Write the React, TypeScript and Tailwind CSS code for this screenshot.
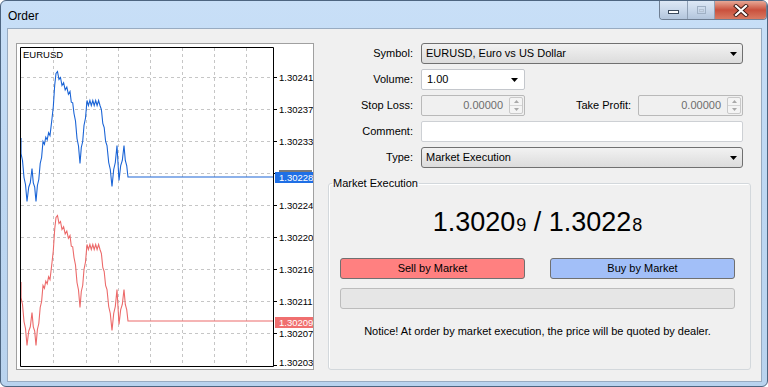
import React from 'react'

// tick-like chart path, keypoints in svg coords
const KEYS: [number, number][] = [
  [4, 94], [4, 106], [10, 154], [15, 126], [19, 154], [26, 99], [33, 88], [35, 76], [39, 26],
  [45, 38], [53, 49], [57, 66], [63, 116], [67, 83], [70, 58], [83, 58], [90, 103], [95, 139],
  [100, 103], [102, 133], [107, 103], [111, 133], [256, 133],
]

function buildPath(offset: number) {
  const pts: string[] = []
  let k = 0
  for (let i = 0; i < KEYS.length - 1; i++) {
    const [x0, y0] = KEYS[i]
    const [x1, y1] = KEYS[i + 1]
    const flat = x0 >= 111
    const steps = flat ? 1 : Math.max(1, Math.round((x1 - x0) / 1.5))
    for (let s = 0; s < steps; s++) {
      const x = x0 + ((x1 - x0) * s) / steps
      const y = y0 + ((y1 - y0) * s) / steps
      const j = flat || x1 === x0 ? 0 : k % 2 ? 3.5 : -1.5
      k++
      pts.push(`${x.toFixed(1)},${(y + j + offset).toFixed(1)}`)
    }
  }
  const last = KEYS[KEYS.length - 1]
  pts.push(`${last[0]},${last[1] + offset}`)
  return pts.join(' ')
}

const GRID_X = [36, 69, 101, 133, 165, 197, 229]
const LEVELS = ['1.30241', '1.30237', '1.30233', '1.30228', '1.30224', '1.30220', '1.30216', '1.30211', '1.30207']
const CHART_FONT = 'Liberation Sans, Arial, sans-serif'

function Chart() {
  return (
    <svg width="296" height="325" className="block">
      <rect x="0" y="0" width="296" height="325" fill="#ffffff" />
      {GRID_X.map(x => (
        <line key={x} x1={x + 0.5} y1="4" x2={x + 0.5} y2="322" stroke="#c6c6c6" strokeDasharray="3 3" />
      ))}
      {LEVELS.map((_, i) => (
        <line key={i} x1="4" y1={33.5 + i * 32} x2="256" y2={33.5 + i * 32} stroke="#c6c6c6" strokeDasharray="3 3" />
      ))}
      <polyline points={buildPath(0)} fill="none" stroke="#1a64d6" strokeWidth="1.1" />
      <polyline points={buildPath(144)} fill="none" stroke="#ec6a6a" strokeWidth="1.1" />
      <path d="M3.5 3.5 H256.5 V322.5 H3.5 Z" fill="none" stroke="#000" />
      {LEVELS.map((l, i) => (
        <g key={l}>
          <line x1="256" y1={33.5 + i * 32} x2="260" y2={33.5 + i * 32} stroke="#000" />
          {i !== 3 && (
            <text x="262" y={37 + i * 32} fontSize="9.5" fill="#000" fontFamily={CHART_FONT}>{l}</text>
          )}
        </g>
      ))}
      <line x1="256" y1="321.5" x2="260" y2="321.5" stroke="#000" />
      <text x="262" y="322" fontSize="9.5" fill="#000" fontFamily={CHART_FONT}>1.30203</text>
      <text x="6" y="14" fontSize="9.5" fill="#000" fontFamily={CHART_FONT}>EURUSD</text>
      {/* price level under the bid marker, peeking out at the top */}
      <rect x="262" y="126" width="33" height="2" fill="#7a7a7a" />
      <rect x="258" y="128" width="38" height="11" fill="#1f6fe5" />
      <text x="262" y="137.2" fontSize="9.5" fill="#fff" fontFamily={CHART_FONT}>1.30228</text>
      <rect x="258" y="273" width="38" height="11" fill="#f06f6f" />
      <text x="262" y="282.2" fontSize="9.5" fill="#fff" fontFamily={CHART_FONT}>1.30209</text>
    </svg>
  )
}

function Arrow() {
  return (
    <svg width="7" height="4" viewBox="0 0 7 4" className="block">
      <path d="M0 0 H7 L3.5 4 Z" fill="#000" />
    </svg>
  )
}

function Combo({ text, w }: { text: string; w: string }) {
  return (
    <div className={`${w} h-[21px] flex items-center pl-[4px] pr-[5px] rounded-[3px] border border-[#707070] bg-gradient-to-b from-[#f2f2f2] to-[#dcdcdc] text-[11px] text-black`}>
      <span className="flex-1">{text}</span>
      <Arrow />
    </div>
  )
}

function Spin() {
  return (
    <div className="w-[14px] h-[17px] flex flex-col border border-[#c9c9c9] rounded-[2px] bg-[#f4f4f4]">
      <div className="flex-1 flex items-center justify-center border-b border-[#d6d6d6]">
        <svg width="5" height="3" viewBox="0 0 5 3"><path d="M0 3 L2.5 0 L5 3 Z" fill="#a8a8a8" /></svg>
      </div>
      <div className="flex-1 flex items-center justify-center">
        <svg width="5" height="3" viewBox="0 0 5 3"><path d="M0 0 H5 L2.5 3 Z" fill="#a8a8a8" /></svg>
      </div>
    </div>
  )
}

function SpinField({ w }: { w: string }) {
  return (
    <div className={`${w} h-[21px] flex items-center justify-end pr-[1px] border border-[#b9b9b9] rounded-[2px] bg-[#f0f0f0] text-[11px] text-[#6d6d6d]`}>
      <span className="mr-[6px]">0.00000</span>
      <Spin />
    </div>
  )
}

function Label({ children }: { children: React.ReactNode }) {
  return <div className="w-[99px] text-right text-[11px] text-black">{children}</div>
}

export default function App() {
  return (
    <div className="w-[768px] h-[387px] bg-white font-['Liberation_Sans',Arial,sans-serif]">
      <div className="w-[768px] h-[387px] rounded-[6px] border border-[#4d6580] bg-gradient-to-b from-[#c8dff7] via-[#bdd7f2] to-[#b9d3ee] flex flex-col overflow-hidden">
        {/* title bar */}
        <div className="h-[27px] flex items-start">
          <span className="text-[12px] text-black ml-[7px] mt-[9px] leading-none">Order</span>
          <div className="ml-auto flex h-[19px] rounded-b-[4px] overflow-hidden border border-t-0 border-[#6f7f93]">
            <div className="w-[28px] flex items-center justify-center bg-gradient-to-b from-[#dde8f5] via-[#c9d8ea] to-[#b2c5dc] border-r border-[#8fa0b5]">
              <div className="w-[11px] h-[4px] mt-[3px] bg-white border border-[#3b4a5c]" />
            </div>
            <div className="w-[27px] flex items-center justify-center bg-gradient-to-b from-[#dde8f5] via-[#c9d8ea] to-[#b2c5dc] border-r border-[#8fa0b5]">
              <div className="w-[9px] h-[8px] border border-[#9fb0c4] flex items-center justify-center">
                <div className="w-[5px] h-[3px] border border-[#b4c2d2]" />
              </div>
            </div>
            <div className="w-[51px] flex items-center justify-center bg-gradient-to-b from-[#e6a897] via-[#c9503d] to-[#d87a62]">
              <svg width="16" height="13" viewBox="0 0 16 13">
                <path d="M3 2 L13 11 M13 2 L3 11" stroke="#3a1a14" strokeWidth="4" strokeLinecap="square" />
                <path d="M3 2 L13 11 M13 2 L3 11" stroke="#ffffff" strokeWidth="2.2" strokeLinecap="square" />
              </svg>
            </div>
          </div>
        </div>

        {/* client area */}
        <div className="ml-[6px] mr-[5px] mb-[4px] flex-1 border border-[#98abc1] bg-[#f0f0f0] flex">
          <div className="pl-[8px] pt-[14px]">
            <div className="w-[298px] h-[327px] border border-[#a0a0a0] bg-white">
              <Chart />
            </div>
          </div>

          <div className="flex-1 pt-[14px] flex flex-col">
            <div className="flex flex-col gap-[5px]">
              <div className="flex items-center gap-[8px]">
                <Label>Symbol:</Label>
                <Combo text="EURUSD, Euro vs US Dollar" w="w-[322px]" />
              </div>
              <div className="flex items-center gap-[8px]">
                <Label>Volume:</Label>
                <div className="w-[104px] h-[21px] flex items-center pl-[5px] pr-[6px] border border-[#c4c7cc] rounded-[2px] bg-white text-[11px] text-black">
                  <span className="flex-1">1.00</span>
                  <Arrow />
                </div>
              </div>
              <div className="flex items-center gap-[8px]">
                <Label>Stop Loss:</Label>
                <SpinField w="w-[104px]" />
                <div className="w-[98px] text-right text-[11px] text-black">Take Profit:</div>
                <div className="ml-[-1px]">
                  <SpinField w="w-[105px]" />
                </div>
              </div>
              <div className="flex items-center gap-[8px]">
                <Label>Comment:</Label>
                <div className="w-[322px] h-[21px] border border-[#cdd0d4] rounded-[2px] bg-white" />
              </div>
              <div className="flex items-center gap-[8px]">
                <Label>Type:</Label>
                <Combo text="Market Execution" w="w-[322px]" />
              </div>
            </div>

            <fieldset className="mt-[9px] ml-[14px] w-[423px] h-[193px] border border-[#d3d8dc] rounded-[3px] shadow-[inset_1px_1px_0_#ffffff]">
              <legend className="ml-[3px] px-[1px] text-[11px] text-black leading-[13px]">Market Execution</legend>
              <div className="pl-[11px] w-[406px] flex flex-col">
                <div className="mt-[19px] flex items-baseline justify-center text-black leading-none">
                  <span className="text-[27px]">1.3020</span>
                  <span className="text-[18px] ml-[1px]">9</span>
                  <span className="text-[27px] whitespace-pre"> / </span>
                  <span className="text-[27px]">1.3022</span>
                  <span className="text-[18px] ml-[1px]">8</span>
                </div>
                <div className="mt-[22px] flex justify-between">
                  <div className="w-[185px] h-[21px] flex items-center justify-center rounded-[3px] border border-[#707070] bg-[#ff8080] text-[11px] text-black">Sell by Market</div>
                  <div className="w-[185px] h-[21px] flex items-center justify-center rounded-[3px] border border-[#707070] bg-[#a2bff8] text-[11px] text-black">Buy by Market</div>
                </div>
                <div className="mt-[9px] h-[21px] rounded-[3px] border border-[#bcbcbc] bg-[#e6e6e6]" />
                <div className="mt-[14px] text-center text-[11px] text-black">Notice! At order by market execution, the price will be quoted by dealer.</div>
              </div>
            </fieldset>
          </div>
        </div>
      </div>
    </div>
  )
}
